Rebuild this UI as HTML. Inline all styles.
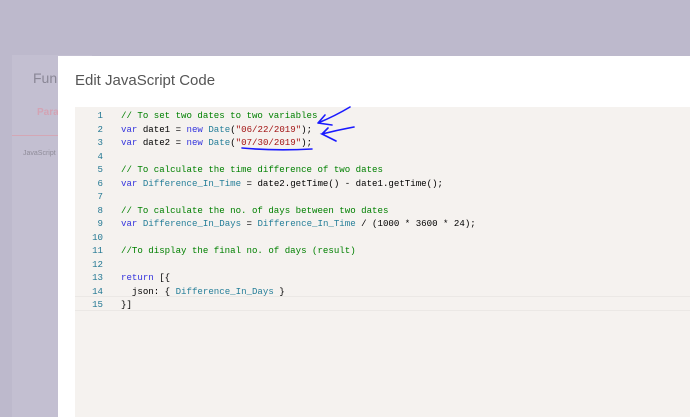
<!DOCTYPE html>
<html style="margin:0;width:690px;height:417px;overflow:hidden"><head><style>
body{margin:0;width:690px;height:417px;overflow:hidden;background:#bdb9cc;font-family:"Liberation Sans",sans-serif;position:relative}
.card{position:absolute;left:12px;top:55px;width:80px;height:362px;background:#c3bfd1}
.fun{position:absolute;left:33px;top:70px;font-size:14px;color:#8a8796}
.par{position:absolute;left:37px;top:107px;font-size:10px;color:#d3a3b4;font-weight:bold}
.line{position:absolute;left:12px;top:135px;width:50px;height:1px;background:#d4a7b5}
.js{position:absolute;left:23px;top:150px;font-size:7px;color:#8f8c99}
.modal{position:absolute;left:58px;top:56px;width:632px;height:361px;background:#fff}
.title{position:absolute;left:75px;top:72px;font-size:15px;color:#555}
.code{position:absolute;left:75px;top:107px;width:615px;height:310px;background:#f5f2ef}
.cur{position:absolute;left:0;top:189px;width:615px;height:13px;border-top:1px solid #ebe8e5;border-bottom:1px solid #ebe8e5}
pre{margin:0;position:absolute;top:2px;font-family:"Liberation Mono",monospace;font-size:9.1px;line-height:13.5px}
.ln{left:0;width:28px;text-align:right;color:#237893}
.tx{left:46px;color:#000}
.c{color:#008000}.k{color:#3333dd}.t{color:#267f99}.s{color:#a31515}
</style></head><body>
<div class="card"></div><div class="fun">Fun</div><div class="par">Para</div><div class="line"></div><div class="js">JavaScript</div>
<div class="modal"></div>
<div class="title">Edit JavaScript Code</div>
<div class="code"><div class="cur"></div>
<pre class="ln">1
2
3
4
5
6
7
8
9
10
11
12
13
14
15</pre>
<pre class="tx"><span class="c">// To set two dates to two variables</span>
<span class="k">var</span> date1 = <span class="k">new</span> <span class="t">Date</span>(<span class="s">"06/22/2019"</span>);
<span class="k">var</span> date2 = <span class="k">new</span> <span class="t">Date</span>(<span class="s">"07/30/2019"</span>);

<span class="c">// To calculate the time difference of two dates</span>
<span class="k">var</span> <span class="t">Difference_In_Time</span> = date2.getTime() - date1.getTime();

<span class="c">// To calculate the no. of days between two dates</span>
<span class="k">var</span> <span class="t">Difference_In_Days</span> = <span class="t">Difference_In_Time</span> / (1000 * 3600 * 24);

<span class="c">//To display the final no. of days (result)</span>

<span class="k">return</span> [{
  json: { <span class="t">Difference_In_Days</span> }
}]</pre>
</div>
<svg style="position:absolute;left:0;top:0" width="690" height="417" fill="none" stroke="#1a1aff" stroke-width="1.6" stroke-linecap="round">
<path d="M350 107 Q335 116 318 123 M318 123 L332 125 M318 123 L325 115"/>
<path d="M354 127 Q338 130 322 134 L336 141 M322 134 L328 128"/>
<path d="M242 148 Q275 151 312 149"/>
</svg>
</body></html>
